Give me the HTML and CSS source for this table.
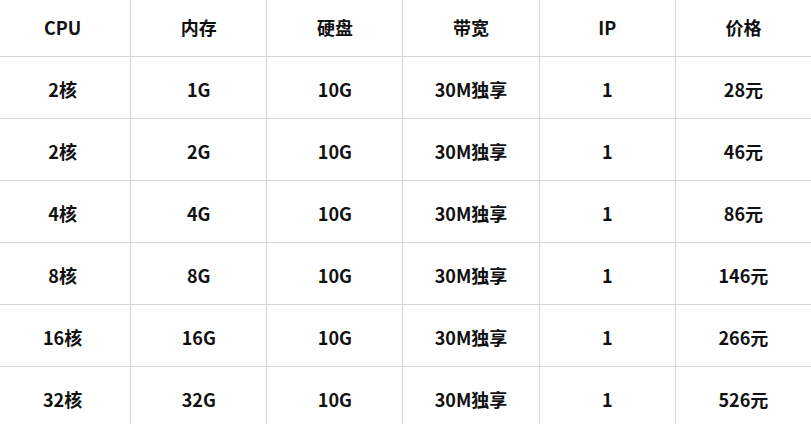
FILE: index.html
```html
<!DOCTYPE html>
<html lang="zh-CN">
<head>
<meta charset="utf-8">
<link rel="stylesheet" href="styles.css">
</head>
<body>
<table class="price-table">
  <thead>
    <tr><th>CPU</th><th>内存</th><th>硬盘</th><th>带宽</th><th>IP</th><th>价格</th></tr>
  </thead>
  <tbody>
    <tr><td>2核</td><td>1G</td><td>10G</td><td>30M独享</td><td>1</td><td>28元</td></tr>
    <tr><td>2核</td><td>2G</td><td>10G</td><td>30M独享</td><td>1</td><td>46元</td></tr>
    <tr><td>4核</td><td>4G</td><td>10G</td><td>30M独享</td><td>1</td><td>86元</td></tr>
    <tr><td>8核</td><td>8G</td><td>10G</td><td>30M独享</td><td>1</td><td>146元</td></tr>
    <tr><td>16核</td><td>16G</td><td>10G</td><td>30M独享</td><td>1</td><td>266元</td></tr>
    <tr><td>32核</td><td>32G</td><td>10G</td><td>30M独享</td><td>1</td><td>526元</td></tr>
  </tbody>
</table>
</body>
</html>
```
FILE: styles.css
```css
html, body {
  margin: 0;
  padding: 0;
  background: #ffffff;
  overflow: hidden;
}
.price-table {
  border-collapse: collapse;
  table-layout: fixed;
  width: 818px;
  margin: -6px 0 0 -6px;
  font-family: "Noto Sans CJK SC", "Liberation Sans", sans-serif;
  font-size: 18px;
  font-weight: 600;
  color: #111111;
}
.price-table th,
.price-table td {
  border: 1px solid #d6d6d6;
  height: 59px;
  padding: 2px 0 0 0;
  text-align: center;
  vertical-align: middle;
  font-weight: 600;
  line-height: 20px;
}
```
